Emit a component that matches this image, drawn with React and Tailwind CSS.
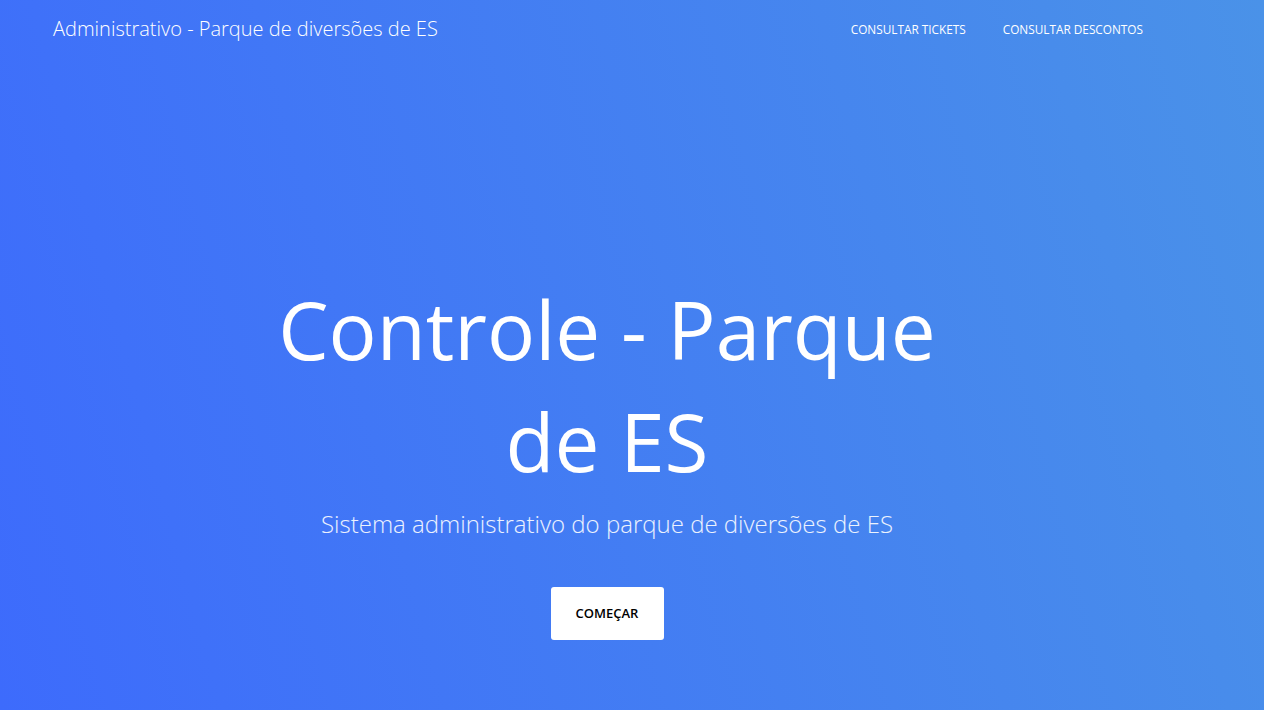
import React from "react";

const font = { fontFamily: '"Open Sans", "Liberation Sans", sans-serif' };

const NavBar = () => (
  <nav className="flex items-center justify-between h-[58px] pl-[53px] pr-[121px]">
    <a href="#" className="text-white text-[20px] font-light">
      Administrativo - Parque de diversões de ES
    </a>
    <ul className="flex items-center gap-[37px] text-white text-[11.8px] pt-[2px]">
      <li>
        <a href="#">CONSULTAR TICKETS</a>
      </li>
      <li>
        <a href="#">CONSULTAR DESCONTOS</a>
      </li>
    </ul>
  </nav>
);

const Hero = () => (
  <header className="flex flex-col items-center pr-[50px] pt-[215px]">
    <h1 className="text-white text-[80px] font-normal leading-[112px] text-center max-w-[720px]">
      Controle - Parque de ES
    </h1>
    <p className="text-white/90 text-[24px] leading-[36px] font-light mt-[9px]">
      Sistema administrativo do parque de diversões de ES
    </p>
    <a
      href="#"
      className="mt-[45px] bg-white text-black text-[13px] font-semibold rounded-[3px] w-[113px] h-[53px] flex items-center justify-center"
    >
      COMEÇAR
    </a>
  </header>
);

export default function App() {
  return (
    <div
      className="w-full h-[710px] overflow-hidden bg-linear-[75deg] from-[#3d6bfc] to-[#4a92e8]"
      style={font}
    >
      <NavBar />
      <Hero />
    </div>
  );
}
